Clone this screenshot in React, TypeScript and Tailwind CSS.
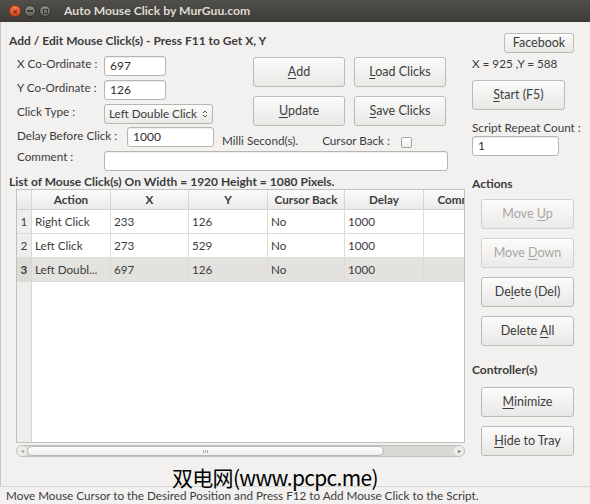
import React from "react";

const font = { fontFamily: "Lato, 'Noto Sans', sans-serif" };

function Btn({
  children,
  className = "",
  disabled = false,
}: {
  children: React.ReactNode;
  className?: string;
  disabled?: boolean;
}) {
  return (
    <button
      className={
        "flex items-center justify-center rounded-[3px] border border-[#bdbab5] bg-gradient-to-b from-[#fbfbfa] to-[#e9e8e6] text-[12.5px] shadow-[inset_0_1px_0_#ffffff] " +
        (disabled ? "text-[#a8a6a2] border-[#d2d0cc] from-[#f5f4f3] to-[#eceae8] " : "text-[#3c3c3c] ") +
        className
      }
    >
      <span className="whitespace-pre">{children}</span>
    </button>
  );
}

function U({ children }: { children: React.ReactNode }) {
  return <span className="underline underline-offset-2 decoration-1">{children}</span>;
}

function Field({ value, className = "" }: { value: string; className?: string }) {
  return (
    <div
      className={
        "flex h-[20px] shrink-0 items-center rounded-[3px] border border-[#b8b5b0] bg-white pl-[5px] text-[12px] text-[#2e2e2e] shadow-[inset_0_1px_1px_rgba(0,0,0,0.08)] " +
        className
      }
    >
      {value}
    </div>
  );
}

const cols = [
  { name: "Action", w: "w-[79px]" },
  { name: "X", w: "w-[78px]" },
  { name: "Y", w: "w-[79px]" },
  { name: "Cursor Back", w: "w-[77px]" },
  { name: "Delay", w: "w-[79px]" },
  { name: "Comment", w: "w-[79px]" },
];

const rows = [
  ["Right Click", "233", "126", "No", "1000", ""],
  ["Left Click", "273", "529", "No", "1000", ""],
  ["Left Doubl...", "697", "126", "No", "1000", ""],
];

export default function App() {
  return (
    <div
      className="relative flex h-[504px] w-[590px] flex-col overflow-hidden bg-[#f2f1f0] text-[11.7px] text-[#3c3c3c]"
      style={font}
    >
      {/* title bar */}
      <div className="flex h-[22px] shrink-0 items-center bg-gradient-to-b from-[#504f4a] to-[#3c3b37] pl-[9px]">
        <div className="flex items-center gap-[3px]">
          <div className="flex h-[12px] w-[12px] items-center justify-center rounded-full border border-[#8a3414] bg-gradient-to-b from-[#f57a50] to-[#d9461b] text-[9px] leading-none text-[#4a1606]">
            ×
          </div>
          <div className="flex h-[12px] w-[12px] items-center justify-center rounded-full border border-[#2d2c29] bg-gradient-to-b from-[#8e8c86] to-[#65635e]">
            <div className="h-[2px] w-[6px] bg-[#3a3935]" />
          </div>
          <div className="flex h-[12px] w-[12px] items-center justify-center rounded-full border border-[#2d2c29] bg-gradient-to-b from-[#8e8c86] to-[#65635e]">
            <div className="h-[5px] w-[5px] border border-[#3a3935]" />
          </div>
        </div>
        <div className="ml-[13px] text-[12.2px] font-bold text-[#dfdbd2]">Auto Mouse Click by MurGuu.com</div>
      </div>

      {/* body */}
      <div className="flex flex-1 border-l border-[#c9c7c3] pl-[8px] pt-[11px]">
        {/* left */}
        <div className="flex w-[456px] flex-col">
          <div className="h-[16px] text-[12px] font-bold leading-[16px]">
            Add / Edit Mouse Click(s) - Press F11 to Get X, Y
          </div>

          <div className="mt-[7px] flex h-[70px]">
            <div className="flex w-[244px] flex-col gap-[4px] pl-[8px]">
              <div className="flex h-[20px] items-center">
                <span className="-mt-[4px] w-[87px]">X Co-Ordinate :</span>
                <Field value="697" className="w-[62px]" />
              </div>
              <div className="flex h-[20px] items-center">
                <span className="-mt-[4px] w-[87px]">Y Co-Ordinate :</span>
                <Field value="126" className="w-[62px]" />
              </div>
              <div className="flex h-[20px] items-center">
                <span className="-mt-[4px] w-[87px]">Click Type :</span>
                <div className="flex h-[20px] w-[109px] items-center justify-between rounded-[3px] border border-[#b8b5b0] bg-gradient-to-b from-[#fbfbfa] to-[#ebeae8] pl-[4px] pr-[4px] whitespace-nowrap">
                  <span>Left Double Click</span>
                  <svg width="6" height="10" viewBox="0 0 6 10">
                    <path d="M1 4 L3 2 L5 4" fill="none" stroke="#555" strokeWidth="1" />
                    <path d="M1 6 L3 8 L5 6" fill="none" stroke="#555" strokeWidth="1" />
                  </svg>
                </div>
              </div>
            </div>
            <div className="grid grid-cols-[92px_92px] gap-x-[9px] gap-y-[9px] pt-[1px]">
              <Btn className="h-[30px]">
                <U>A</U>dd
              </Btn>
              <Btn className="h-[30px]">
                <U>L</U>oad Clicks
              </Btn>
              <Btn className="h-[30px]">
                <U>U</U>pdate
              </Btn>
              <Btn className="h-[30px]">
                <U>S</U>ave Clicks
              </Btn>
            </div>
          </div>

          <div className="mt-[1px] flex h-[20px] items-center pl-[8px]">
            <span className="-mt-[2px] w-[110px] whitespace-nowrap">Delay Before Click :</span>
            <Field value="1000" className="w-[87px]" />
            <span className="ml-[8px] mt-[7px] whitespace-nowrap">Milli Second(s).</span>
            <span className="ml-[24px] mt-[7px] whitespace-nowrap">Cursor Back :</span>
            <div className="ml-[11px] mt-[11px] h-[11px] w-[11px] shrink-0 rounded-[2px] border border-[#a9a6a1] bg-gradient-to-b from-white to-[#eeedeb]" />
          </div>

          <div className="mt-[4px] flex h-[20px] items-center pl-[8px]">
            <span className="-mt-[8px] w-[87px]">Comment :</span>
            <Field value="" className="w-[344px]" />
          </div>

          <div className="mt-[4px] h-[14px] text-[12px] font-bold leading-[14px] whitespace-nowrap">
            List of Mouse Click(s) On Width = 1920 Height = 1080 Pixels.
          </div>

          {/* table */}
          <div className="ml-[7px] flex w-[449px] flex-col">
            <div className="flex h-[254px] overflow-hidden border border-[#c3c1bd] bg-white">
              <div className="flex w-[15px] shrink-0 flex-col border-r border-[#d8d6d3] bg-[#efeeec]">
                <div className="h-[20px] border-b border-[#d3d1ce] bg-gradient-to-b from-[#f7f7f6] to-[#e9e8e6]" />
                {rows.map((r, i) => (
                  <div
                    key={i}
                    className={
                      "flex h-[24px] items-center justify-center border-b border-[#dedcd9] " +
                      (i === 2 ? "bg-[#dcdbd8] font-bold" : "")
                    }
                  >
                    {i + 1}
                  </div>
                ))}
              </div>
              <div className="flex flex-col">
                <div className="flex h-[20px] shrink-0 border-b border-[#d3d1ce] bg-gradient-to-b from-[#fbfbfb] to-[#ebeae8]">
                  {cols.map((c) => (
                    <div
                      key={c.name}
                      className={
                        "flex shrink-0 items-center justify-center border-r border-[#d8d6d3] font-bold whitespace-nowrap " +
                        c.w
                      }
                    >
                      {c.name}
                    </div>
                  ))}
                </div>
                {rows.map((r, i) => (
                  <div
                    key={i}
                    className={"flex h-[24px] shrink-0 border-b border-[#dedcd9] " + (i === 2 ? "bg-[#e3e2df]" : "")}
                  >
                    {r.map((v, j) => (
                      <div
                        key={j}
                        className={
                          "flex shrink-0 items-center border-r border-[#dedcd9] pl-[3px] whitespace-nowrap " + cols[j].w
                        }
                      >
                        {v}
                      </div>
                    ))}
                  </div>
                ))}
              </div>
            </div>
            {/* horizontal scrollbar */}
            <div className="mt-[2px] flex h-[12px] items-center rounded-full border border-[#c2c0bc] bg-[#dad8d5]">
              <div className="flex h-[10px] w-[10px] items-center justify-center rounded-full bg-[#eeedeb] text-[6px] leading-none text-[#999]">
                ◂
              </div>
              <div className="flex h-[10px] w-[357px] items-center justify-center rounded-full border border-[#b9b7b3] bg-gradient-to-b from-[#ffffff] to-[#efeeec]">
                <div className="flex gap-[1px]">
                  <div className="h-[3px] w-[1px] bg-[#aaa]" />
                  <div className="h-[3px] w-[1px] bg-[#aaa]" />
                  <div className="h-[3px] w-[1px] bg-[#aaa]" />
                </div>
              </div>
              <div className="flex-1" />
              <div className="flex h-[10px] w-[10px] items-center justify-center rounded-full bg-[#eeedeb] text-[6px] leading-none text-[#666]">
                ▸
              </div>
            </div>
          </div>
        </div>

        {/* right */}
        <div className="ml-[7px] flex w-[103px] flex-col">
          <div className="flex justify-end pr-[1px]">
            <Btn className="h-[20px] w-[70px]">Facebook</Btn>
          </div>
          <div className="mt-[2px] h-[16px] leading-[16px] whitespace-nowrap">X = 925 ,Y = 588</div>
          <Btn className="mt-[9px] h-[30px] w-[93px]">
            <U>S</U>tart (F5)
          </Btn>
          <div className="mt-[9px] h-[16px] leading-[16px] whitespace-nowrap">Script Repeat Count :</div>
          <Field value="1" className="mt-[1px] w-[87px]" />
          <div className="mt-[20px] h-[16px] text-[12px] font-bold leading-[16px]">Actions</div>
          <div className="ml-[9px] mt-[7px] flex flex-col gap-[9px]">
            <Btn disabled className="h-[30px] w-[93px]">
              Move <U>U</U>p
            </Btn>
            <Btn disabled className="h-[30px] w-[93px]">
              Move <U>D</U>own
            </Btn>
            <Btn className="h-[30px] w-[93px]">
              De<U>l</U>ete (Del)
            </Btn>
            <Btn className="h-[30px] w-[93px]">
              Delete <U>A</U>ll
            </Btn>
          </div>
          <div className="mt-[16px] h-[16px] text-[12px] font-bold leading-[16px]">Controller(s)</div>
          <div className="ml-[9px] mt-[9px] flex flex-col gap-[9px]">
            <Btn className="h-[30px] w-[93px]">
              <U>M</U>inimize
            </Btn>
            <Btn className="h-[30px] w-[93px]">
              <U>H</U>ide to Tray
            </Btn>
          </div>
        </div>
      </div>

      {/* status bar */}
      <div className="flex h-[18px] shrink-0 items-center border-t border-[#d6d4d0] pl-[6px] whitespace-nowrap">
        Move Mouse Cursor to the Desired Position and Press F12 to Add Mouse Click to the Script.
      </div>

      {/* watermark */}
      <div
        className="absolute left-[172px] top-[464px] text-[21px] leading-[26px] tracking-[-0.7px] text-black whitespace-nowrap"
        style={{ fontFamily: "'Noto Sans CJK SC', sans-serif" }}
      >
        双电网(www.pcpc.me)
      </div>
    </div>
  );
}
